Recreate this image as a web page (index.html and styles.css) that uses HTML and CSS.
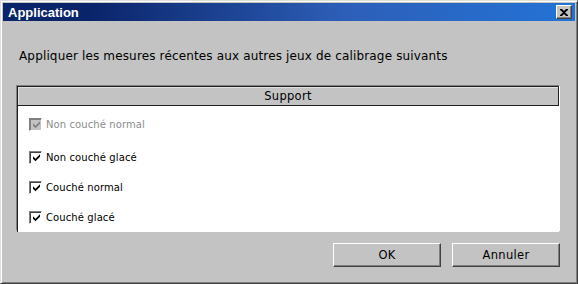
FILE: index.html
```html
<!DOCTYPE html>
<html>
<head>
<meta charset="utf-8">
<link rel="stylesheet" href="styles.css">
</head>
<body>
<div class="window">
  <div class="titlebar">
    <span class="title">Application</span>
    <span class="close"><svg width="8" height="7" viewBox="0 0 8 7"><path d="M0 0h2l2 2 2-2h2v1L5 3.5 8 6v1H6L4 5 2 7H0V6l3-2.5L0 1z" fill="#000"/></svg></span>
  </div>
  <div class="body">
    <p class="prompt">Appliquer les mesures récentes aux autres jeux de calibrage suivants</p>
    <div class="list">
      <div class="header">Support</div>
      <div class="rows">
        <div class="row first disabled"><span class="cb"><svg width="9" height="9" viewBox="0 0 9 9"><path d="M1 3.2l2.5 2.5L8 1.2v2.6L3.5 8.3 1 5.8z" fill="#808080"/></svg></span>Non couché normal</div>
        <div class="row"><span class="cb"><svg width="9" height="9" viewBox="0 0 9 9"><path d="M1 3.2l2.5 2.5L8 1.2v2.6L3.5 8.3 1 5.8z" fill="#000"/></svg></span>Non couché glacé</div>
        <div class="row"><span class="cb"><svg width="9" height="9" viewBox="0 0 9 9"><path d="M1 3.2l2.5 2.5L8 1.2v2.6L3.5 8.3 1 5.8z" fill="#000"/></svg></span>Couché normal</div>
        <div class="row"><span class="cb"><svg width="9" height="9" viewBox="0 0 9 9"><path d="M1 3.2l2.5 2.5L8 1.2v2.6L3.5 8.3 1 5.8z" fill="#000"/></svg></span>Couché glacé</div>
      </div>
    </div>
    <div class="buttons">
      <button class="btn">OK</button>
      <button class="btn">Annuler</button>
    </div>
  </div>
</div>
</body>
</html>
```
FILE: styles.css
```css
html, body { margin: 0; padding: 0; }
body {
  width: 578px; height: 284px; overflow: hidden;
  background: #c3c3c3;
  font-family: "DejaVu Sans", Verdana, sans-serif;
}
.window {
  box-sizing: border-box;
  width: 578px; height: 284px;
  background: #c3c3c3;
  border-top: 1px solid #dfdfdf;
  border-left: 1px solid #dfdfdf;
  border-right: 1px solid #404040;
  border-bottom: 1px solid #404040;
  box-shadow: inset 1px 1px 0 #fff, inset -1px -1px 0 #808080;
  padding: 2px;
  display: flex; flex-direction: column;
}
.titlebar {
  height: 18px;
  background: linear-gradient(to right, #0a246a, #0a246a 15%, #2d5fb8 60%, #2373d6);
  display: flex; align-items: center; justify-content: space-between;
  padding: 0 3px 0 5px;
}
.title {
  color: #fff; font-weight: bold; font-size: 13px;
  font-family: "Liberation Sans", Arial, sans-serif;
}
.close {
  width: 16px; height: 14px; box-sizing: border-box;
  background: #c3c3c3;
  border-top: 1px solid #fff; border-left: 1px solid #fff;
  border-right: 1px solid #404040; border-bottom: 1px solid #404040;
  box-shadow: inset -1px -1px 0 #808080;
  display: flex; align-items: center; justify-content: center;
}
.body {
  flex: 1;
  display: flex; flex-direction: column;
  padding: 0 15px 0 13px;
}
.prompt {
  margin: 27px 0 0 3px;
  font-size: 12px; color: #000;
  line-height: 16px;
  letter-spacing: 0.15px;
}
.list {
  margin-top: 21px;
  height: 146px;
  box-sizing: border-box;
  border-top: 1px solid #808080; border-left: 1px solid #808080;
  border-right: 1px solid #fff; border-bottom: 1px solid #fff;
  display: flex; flex-direction: column;
}
.header {
  height: 20px; box-sizing: border-box;
  border: 1px solid #202020;
  background: #c3c3c3;
  box-shadow: inset 1px 1px 0 #e0e0e0;
  text-align: center; font-size: 11.5px; line-height: 18px;
  letter-spacing: 0.3px;
}
.rows {
  flex: 1; background: #fff;
  border-left: 1px solid #202020;
}
.row {
  height: 30px; display: flex; align-items: center;
  padding-left: 11px;
  font-size: 10px; color: #000;
  letter-spacing: 0.1px;
  font-family: "DejaVu Sans", Tahoma, sans-serif;
}
.row.first { height: 36px; }
.row.disabled { color: #8c8c8c; }
.cb {
  width: 13px; height: 13px; box-sizing: border-box;
  border-top: 1px solid #808080; border-left: 1px solid #808080;
  border-right: 1px solid #fff; border-bottom: 1px solid #fff;
  box-shadow: inset 1px 1px 0 #404040;
  background: #fff;
  display: flex; align-items: center; justify-content: center;
  margin-right: 4px;
}
.row.disabled .cb { background: #c3c3c3; box-shadow: inset 1px 1px 0 #808080; }
.cb svg { margin: 1px 0 0 1px; }
.buttons {
  display: flex; justify-content: flex-end; gap: 11px;
  margin-top: 12px;
}
.btn {
  width: 108px; height: 24px; box-sizing: border-box;
  background: #c3c3c3;
  border-top: 1px solid #fff; border-left: 1px solid #fff;
  border-right: 1px solid #404040; border-bottom: 1px solid #404040;
  box-shadow: inset -1px -1px 0 #808080;
  font-family: "DejaVu Sans", Tahoma, sans-serif;
  font-size: 11.5px; color: #000; padding: 0;
  letter-spacing: 0.3px;
}
```
